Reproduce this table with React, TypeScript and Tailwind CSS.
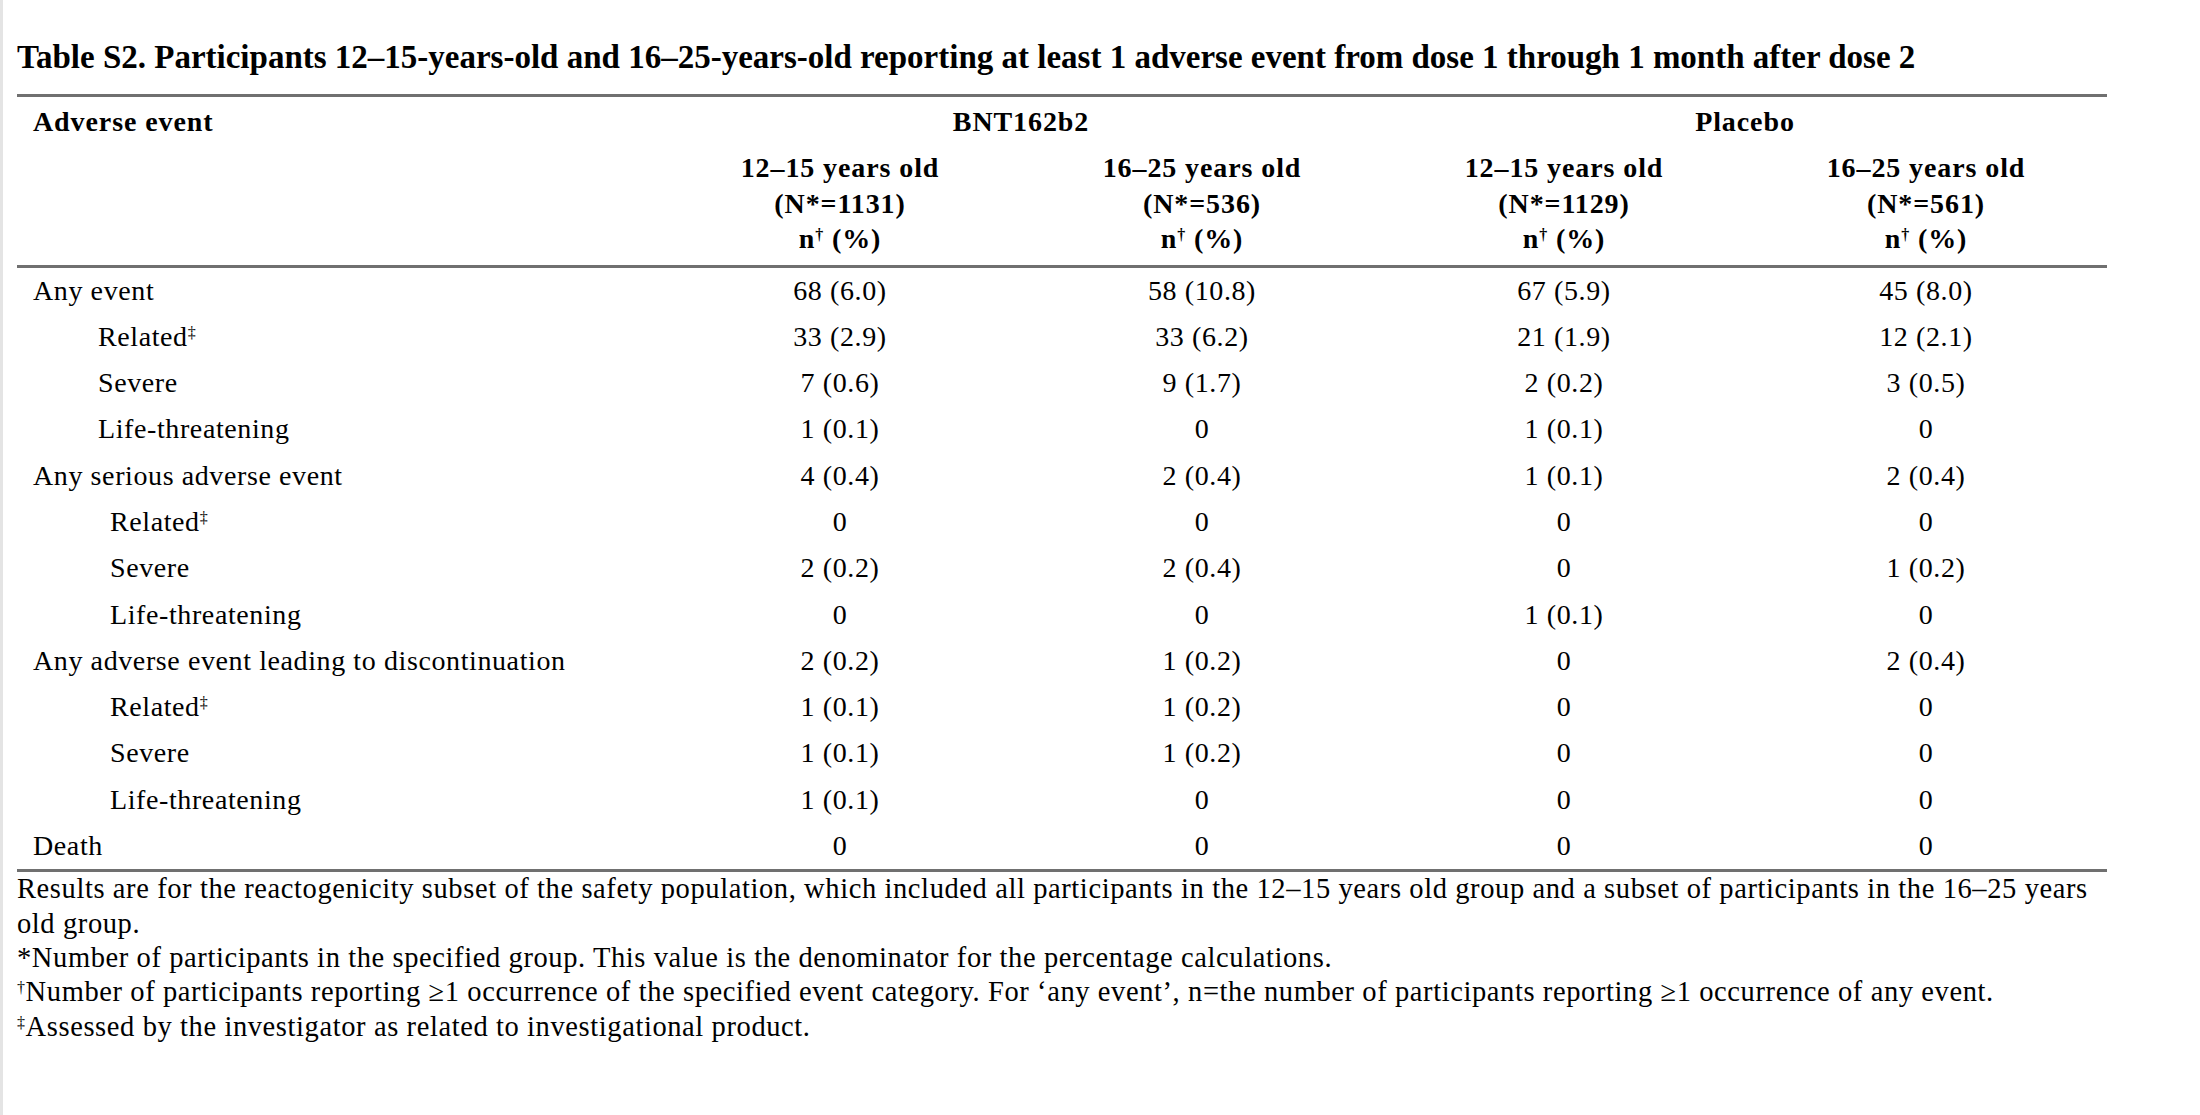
import React from "react";

type Row = { label: string; sup?: boolean; indent: 0 | 1 | 2; vals: string[] };

const rows: Row[] = [
  { label: "Any event", indent: 0, vals: ["68 (6.0)", "58 (10.8)", "67 (5.9)", "45 (8.0)"] },
  { label: "Related", sup: true, indent: 1, vals: ["33 (2.9)", "33 (6.2)", "21 (1.9)", "12 (2.1)"] },
  { label: "Severe", indent: 1, vals: ["7 (0.6)", "9 (1.7)", "2 (0.2)", "3 (0.5)"] },
  { label: "Life-threatening", indent: 1, vals: ["1 (0.1)", "0", "1 (0.1)", "0"] },
  { label: "Any serious adverse event", indent: 0, vals: ["4 (0.4)", "2 (0.4)", "1 (0.1)", "2 (0.4)"] },
  { label: "Related", sup: true, indent: 2, vals: ["0", "0", "0", "0"] },
  { label: "Severe", indent: 2, vals: ["2 (0.2)", "2 (0.4)", "0", "1 (0.2)"] },
  { label: "Life-threatening", indent: 2, vals: ["0", "0", "1 (0.1)", "0"] },
  { label: "Any adverse event leading to discontinuation", indent: 0, vals: ["2 (0.2)", "1 (0.2)", "0", "2 (0.4)"] },
  { label: "Related", sup: true, indent: 2, vals: ["1 (0.1)", "1 (0.2)", "0", "0"] },
  { label: "Severe", indent: 2, vals: ["1 (0.1)", "1 (0.2)", "0", "0"] },
  { label: "Life-threatening", indent: 2, vals: ["1 (0.1)", "0", "0", "0"] },
  { label: "Death", indent: 0, vals: ["0", "0", "0", "0"] },
];

const groups = [
  { age: "12–15 years old", n: "(N*=1131)" },
  { age: "16–25 years old", n: "(N*=536)" },
  { age: "12–15 years old", n: "(N*=1129)" },
  { age: "16–25 years old", n: "(N*=561)" },
];

function Rule() {
  return <div className="h-[3px] w-[2090px] bg-[#707070]" />;
}

export default function App() {
  return (
    <div className="h-[1115px] w-[2200px] overflow-hidden border-l-[3px] border-[#e4e4e4] bg-white font-['Liberation_Serif',serif] text-black">
      <div className="pl-[14px]">
        <h1 className="pt-[37px] pb-[17px] text-[33px] font-bold leading-[40px] whitespace-nowrap">
          Table S2. Participants 12–15-years-old and 16–25-years-old reporting at least 1 adverse event from dose 1 through 1 month after dose 2
        </h1>
        <Rule />
        <div className="grid w-[2090px] grid-cols-[642px_repeat(4,362px)] text-[28px] tracking-[0.9px]">
          <div className="pl-[16px] pt-[2px] font-bold leading-[46px]">Adverse event</div>
          <div className="col-span-2 pt-[2px] text-center font-bold leading-[46px]">BNT162b2</div>
          <div className="col-span-2 pt-[2px] text-center font-bold leading-[46px]">Placebo</div>
          <div className="pt-[5px] pb-[8px]" />
          {groups.map((g, i) => (
            <div key={i} className="pt-[5px] pb-[8px] text-center font-bold leading-[35.5px]">
              <div>{g.age}</div>
              <div>{g.n}</div>
              <div>
                n<sup className="text-[16px]">†</sup> (%)
              </div>
            </div>
          ))}
        </div>
        <Rule />
        <div className="grid w-[2090px] grid-cols-[642px_repeat(4,362px)] text-[28px] leading-[46.3px] tracking-[0.6px]">
          {rows.map((r, i) => (
            <React.Fragment key={i}>
              <div
                className={
                  r.indent === 0 ? "pl-[16px]" : r.indent === 1 ? "pl-[81px]" : "pl-[93px]"
                }
              >
                {r.label}
                {r.sup && <sup className="text-[16px]">‡</sup>}
              </div>
              {r.vals.map((v, j) => (
                <div key={j} className="text-center">
                  {v}
                </div>
              ))}
            </React.Fragment>
          ))}
        </div>
        <Rule />
        <div className="text-[28.5px] leading-[34.3px] tracking-[0.6px] whitespace-nowrap">
          <div>
            Results are for the reactogenicity subset of the safety population, which included all participants in the 12–15 years old group and a subset of participants in the 16–25 years
          </div>
          <div>old group.</div>
          <div>*Number of participants in the specified group. This value is the denominator for the percentage calculations.</div>
          <div>
            <sup className="text-[16px]">†</sup>Number of participants reporting ≥1 occurrence of the specified event category. For ‘any event’, n=the number of participants reporting ≥1 occurrence of any event.
          </div>
          <div>
            <sup className="text-[16px]">‡</sup>Assessed by the investigator as related to investigational product.
          </div>
        </div>
      </div>
    </div>
  );
}
